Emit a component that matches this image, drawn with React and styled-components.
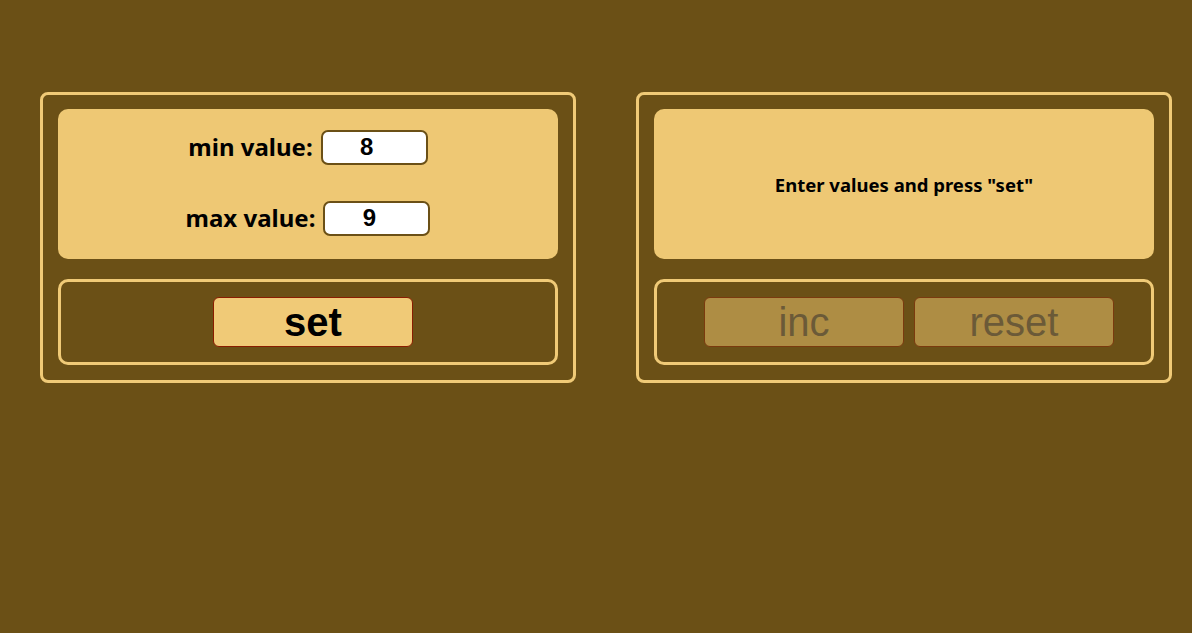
import React from 'react'
import styled, { createGlobalStyle } from 'styled-components'

const GlobalStyle = createGlobalStyle`
  body {
    margin: 0;
    background: #6b5016;
    font-family: "Noto Sans", "Open Sans", sans-serif;
  }
`
const Page = styled.div`
  display: flex;
  align-items: flex-start;
  gap: 60px;
  padding: 92px 0 0 40px;
  min-height: 633px;
  box-sizing: border-box;
`
const Panel = styled.div`
  width: 536px;
  box-sizing: border-box;
  border: 3px solid #f0ca77;
  border-radius: 8px;
  padding: 14px 15px 15px;
  display: flex;
  flex-direction: column;
  gap: 20px;
`
const Display = styled.div`
  height: 150px;
  box-sizing: border-box;
  padding-bottom: ${p => p.$lift || 0}px;
  background: #eec874;
  border-radius: 10px;
  display: flex;
  flex-direction: column;
  align-items: center;
  justify-content: center;
  gap: 36px;
`
const Row = styled.label`
  display: flex;
  align-items: center;
  gap: 8px;
  height: 35px;
  font-size: 24px;
  line-height: 1;
  font-weight: 700;
  color: #000;
`
const Input = styled.input`
  width: 107px;
  height: 35px;
  box-sizing: border-box;
  border: 2px solid #6b5016;
  border-radius: 7px;
  background: #fff;
  text-align: center;
  font-family: "Liberation Sans", Arial, sans-serif;
  font-weight: 700;
  font-size: 24px;
  color: #000;
  outline: none;
`
const Message = styled.div`
  font-size: 18.5px;
  font-weight: 700;
  color: #000;
`
const Controls = styled.div`
  height: 86px;
  box-sizing: border-box;
  border: 3px solid #f0ca77;
  border-radius: 10px;
  display: flex;
  align-items: center;
  justify-content: center;
`
const Button = styled.button`
  width: 200px;
  height: 50px;
  box-sizing: border-box;
  margin: 0 0 0 10px;
  border: 1px solid ${p => (p.disabled ? '#7a3a0e' : '#8a1c00')};
  border-radius: 6px;
  background: ${p => (p.disabled ? '#ae8d44' : '#f0ca77')};
  color: ${p => (p.disabled ? '#6b5a38' : '#000')};
  font-family: "Liberation Sans", Arial, sans-serif;
  font-weight: ${p => (p.disabled ? 400 : 700)};
  font-size: 40px;
  line-height: 1;
  padding: 0;
`

export default function App() {
  return (
    <>
      <GlobalStyle />
      <Page>
        <Panel>
          <Display $lift={3}>
            <Row>min value: <Input type="number" defaultValue={8} /></Row>
            <Row>max value: <Input type="number" defaultValue={9} /></Row>
          </Display>
          <Controls>
            <Button>set</Button>
          </Controls>
        </Panel>
        <Panel>
          <Display>
            <Message>Enter values and press "set"</Message>
          </Display>
          <Controls>
            <Button disabled>inc</Button>
            <Button disabled>reset</Button>
          </Controls>
        </Panel>
      </Page>
    </>
  )
}
